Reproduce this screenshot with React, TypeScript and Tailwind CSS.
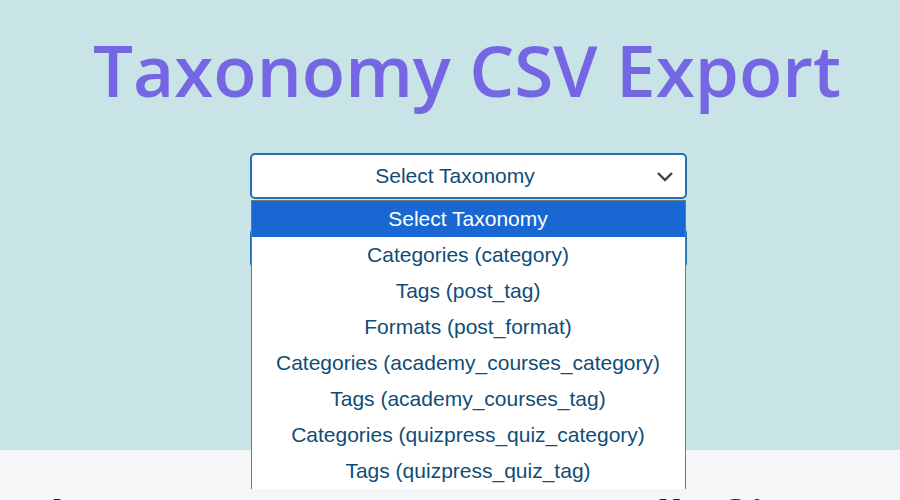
import React from "react";

const options = [
  "Select Taxonomy",
  "Categories (category)",
  "Tags (post_tag)",
  "Formats (post_format)",
  "Categories (academy_courses_category)",
  "Tags (academy_courses_tag)",
  "Categories (quizpress_quiz_category)",
  "Tags (quizpress_quiz_tag)",
];

export default function App() {
  return (
    <div className="w-[900px] h-[500px] overflow-hidden bg-[#f5f6f8] font-['Liberation_Sans',Arial,sans-serif]">
      <div className="bg-[#c9e4e7] h-[450px] flex flex-col items-center pt-[34px]">
        <h1 className="font-['Open_Sans',sans-serif] font-semibold text-[71px] leading-none text-[#7567e4] pl-[34px]">
          Taxonomy CSV Export
        </h1>
        <div className="relative mt-[48px] w-[437px] ml-[36px]">
          <div className="h-[46px] border-2 border-[#2271b1] rounded-[5px] bg-white flex items-center justify-center pr-[26px] relative">
            <span className="text-[21px] text-[#0f4d77]">Select Taxonomy</span>
            <svg className="absolute right-[11px] top-[15px]" width="18" height="12" viewBox="0 0 18 12" fill="none">
              <path d="M2 3l7 7 7-7" stroke="#3c434a" strokeWidth="2.4" />
            </svg>
          </div>
          <div className="mt-[29px] h-[40px] border-2 border-[#2271b1] rounded-[5px] bg-[#2271b1]"></div>
          <div className="absolute left-[1px] top-[47px] w-[435px] bg-white border border-[#767676] border-b-0">
            {options.map((o, i) => (
              <div
                key={o}
                className={
                  i === 0
                    ? "h-[36px] leading-[36px] text-center text-[21px] bg-[#1967d2] text-white"
                    : "h-[36px] leading-[36px] text-center text-[21px] text-[#0f4d77]"
                }
              >
                {o}
              </div>
            ))}
          </div>
        </div>
      </div>
      <div className="pt-[44px] text-center">
        <h2 className="font-['Open_Sans',sans-serif] font-bold text-[44px] leading-none text-[#1d2327] whitespace-nowrap">
          Select a taxonomy to export all of its terms
        </h2>
      </div>
    </div>
  );
}
